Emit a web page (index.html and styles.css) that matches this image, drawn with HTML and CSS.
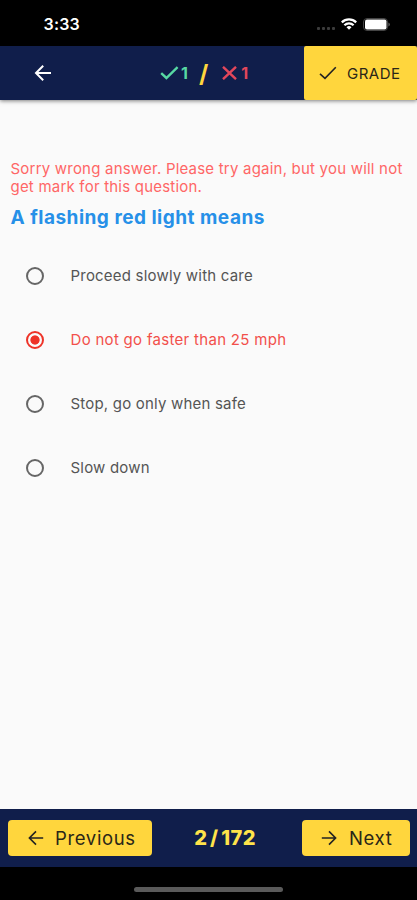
FILE: index.html
```html
<!DOCTYPE html>
<html lang="en">

<head>
    <meta charset="UTF-8">
    <meta name="viewport" content="width=device-width, initial-scale=1.0">
    <title>Driving Test</title>
    <link rel="stylesheet" href="styles.css">
</head>

<body>
    <div class="status-bar">
        <span class="time">3:33</span>
        <div class="status-icons">
            <div class="signal"><i></i><i></i><i></i><i></i></div>
            <svg class="wifi" width="16" height="12" viewBox="0 0 16 12" fill="none" stroke="#fff" stroke-width="2.2">
                <path d="M.8 4.4a10.2 10.2 0 0 1 14.4 0M3.4 7.2a6.5 6.5 0 0 1 9.2 0" />
                <path d="M8 11.8 5.5 9.2a3.6 3.6 0 0 1 5 0z" fill="#fff" stroke="none" />
            </svg>
            <svg class="battery" width="27" height="13" viewBox="0 0 27 13">
                <rect x=".5" y=".5" width="24" height="12" rx="3.5" fill="none" stroke="#444" />
                <rect x="2" y="1.5" width="21.5" height="10" rx="2" fill="#fff" />
                <path d="M25.5 4.5q1.2.5 1.2 2t-1.2 2z" fill="#777" />
            </svg>
        </div>
    </div>

    <header class="app-bar">
        <button class="back" aria-label="Back">
            <svg width="18" height="18" viewBox="0 0 18 18" fill="none" stroke="#fff" stroke-width="2">
                <path d="M17 9H2.5M9.2 1.8 2 9l7.2 7.2" />
            </svg>
        </button>
        <div class="score">
            <svg class="right-icon" width="19" height="14" viewBox="0 0 19 14" fill="none" stroke="#57d9a3" stroke-width="2.4">
                <path d="M1.2 7.2 6.4 12 17.6 1.2" />
            </svg>
            <span class="right">1</span>
            <span class="slash">/</span>
            <svg class="wrong-icon" width="15" height="14" viewBox="0 0 15 14" fill="none" stroke="#e2475b" stroke-width="2.4">
                <path d="M1 .8 14 13.2M14 .8 1 13.2" />
            </svg>
            <span class="wrong">1</span>
        </div>
        <button class="grade">
            <svg width="18" height="14" viewBox="0 0 18 14" fill="none" stroke="#222" stroke-width="1.6">
                <path d="M1 7.8 6 12.4 16.8 1.2" />
            </svg>
            <span>GRADE</span>
        </button>
    </header>

    <main class="question">
        <p class="error">Sorry wrong answer. Please try again, but you will not get mark for this question.</p>
        <h1>A flashing red light means</h1>
        <ul class="answers">
            <li><i class="radio"></i><span>Proceed slowly with care</span></li>
            <li class="selected"><i class="radio"></i><span>Do not go faster than 25 mph</span></li>
            <li><i class="radio"></i><span>Stop, go only when safe</span></li>
            <li><i class="radio"></i><span>Slow down</span></li>
        </ul>
    </main>

    <footer class="nav-bar">
        <button class="previous">
            <svg width="16" height="16" viewBox="0 0 16 16" fill="none" stroke="#222" stroke-width="1.6">
                <path d="M15.2 8H1.8M8 1.4 1.4 8 8 14.6" />
            </svg>
            <span>Previous</span>
        </button>
        <span class="page">2 / 172</span>
        <button class="next">
            <svg width="16" height="16" viewBox="0 0 16 16" fill="none" stroke="#222" stroke-width="1.6">
                <path d="M.8 8h13.4M8 1.4 14.6 8 8 14.6" />
            </svg>
            <span>Next</span>
        </button>
    </footer>
    <div class="home-area"><div class="home-indicator"></div></div>
</body>

</html>
```

FILE: styles.css
```css
* {
    box-sizing: border-box;
}

body {
    margin: 0;
    height: 900px;
    display: flex;
    flex-direction: column;
    background: #fafafa;
    font-family: Inter, "Liberation Sans", sans-serif;
    overflow: hidden;
}

button {
    border: 0;
    padding: 0;
    display: flex;
    align-items: center;
    font-family: inherit;
    color: #2a2618;
    background: #ffd63d;
}

svg {
    display: block;
    flex: none;
}

.status-bar {
    height: 46px;
    padding: 2px 27px 0 43.5px;
    display: flex;
    align-items: center;
    justify-content: space-between;
    background: #000;
    color: #fff;
}

.time {
    font-size: 16px;
    font-weight: 600;
    letter-spacing: .2px;
}

.status-icons {
    display: flex;
    align-items: center;
}

.signal {
    display: flex;
    gap: 2px;
    margin: 8px 6px 0 0;
}

.signal i {
    width: 3px;
    height: 3px;
    border-radius: 1px;
    background: #3c3c3c;
}

.battery {
    margin-left: 6px;
}

.app-bar {
    height: 54px;
    display: flex;
    align-items: stretch;
    background: #101e4b;
    box-shadow: 0 1px 4px rgba(0, 0, 0, .5);
}

.back {
    width: 120px;
    padding-left: 34px;
    background: none;
}

.score {
    flex: 1;
    display: flex;
    align-items: center;
    padding-left: 40px;
    font-size: 16px;
    font-weight: 700;
}

.right {
    margin-left: 2px;
    color: #57d9a3;
}

.slash {
    margin: 0 14px 0 11px;
    font-size: 24px;
    color: #ffd63d;
}

.wrong {
    margin-left: 4px;
    color: #e2475b;
}

.grade {
    width: 113px;
    padding-left: 15px;
    gap: 10px;
    border-radius: 2px;
    font-size: 15px;
    letter-spacing: .5px;
}

.question {
    flex: 1;
    padding: 60px 10px 0 10.5px;
}

.error {
    margin: 0;
    font-size: 15px;
    line-height: 18px;
    letter-spacing: .21px;
    color: #f66;
}

h1 {
    margin: 10px 0 0;
    font-size: 19px;
    line-height: 24px;
    font-weight: 700;
    letter-spacing: .5px;
    color: #2690e8;
}

.answers {
    margin: 13.5px 0 0;
    padding: 0;
    list-style: none;
}

.answers li {
    height: 64px;
    padding-left: 15.5px;
    display: flex;
    align-items: center;
    gap: 26.5px;
    font-size: 15px;
    letter-spacing: .2px;
    color: #555;
}

.radio {
    width: 18px;
    height: 18px;
    border: 2px solid #666;
    border-radius: 50%;
}

.answers .selected {
    letter-spacing: .3px;
    color: #f2504b;
}

.selected .radio {
    border-color: #ee3328;
    background: radial-gradient(circle, #ee3328 4.2px, transparent 5px);
}

.nav-bar {
    height: 58px;
    padding: 0 7px 0 8px;
    display: flex;
    align-items: center;
    justify-content: space-between;
    background: #101e4b;
}

.nav-bar button {
    height: 36px;
    border-radius: 4px;
    font-size: 18.5px;
    letter-spacing: .65px;
}

.previous {
    width: 144px;
    padding-left: 20px;
    gap: 11px;
}

.next {
    width: 108px;
    padding-left: 19px;
    gap: 12px;
}

.page {
    margin-right: 4px;
    font-size: 20px;
    font-weight: 800;
    letter-spacing: .4px;
    word-spacing: -2px;
    color: #ffe34a;
}

.home-area {
    height: 33px;
    padding-top: 20px;
    background: #000;
}

.home-indicator {
    width: 149px;
    height: 5px;
    margin: 0 auto;
    border-radius: 3px;
    background: #5a5a5a;
}
```
